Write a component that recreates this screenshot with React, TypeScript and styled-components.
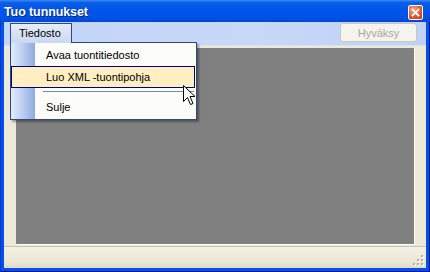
import styled, { createGlobalStyle } from "styled-components";

const GlobalStyle = createGlobalStyle`
  html, body {
    margin: 0;
    padding: 0;
    overflow: hidden;
    background: #ffffff;
  }
`;

const Window = styled.div`
  width: 430px;
  height: 272px;
  display: flex;
  flex-direction: column;
  background: #0053e4;
  box-shadow: inset 1px 0 0 #0831d9, inset -1px 0 0 #00138c, inset 0 -1px 0 #00138c;
  font-family: "Liberation Sans", Arial, sans-serif;
  font-size: 11px;
  color: #000000;
`;

const TitleBar = styled.div`
  height: 22px;
  flex: none;
  display: flex;
  align-items: center;
  justify-content: space-between;
  padding: 0 7px 0 4px;
  background: linear-gradient(
    #3b8cf5 0%,
    #0a5ee8 12%,
    #0055ea 40%,
    #0052e6 80%,
    #0047d6 100%
  );
`;

const Title = styled.span`
  color: #ffffff;
  font-weight: bold;
  font-size: 12.5px;
  letter-spacing: -0.1px;
  text-shadow: 1px 1px 0 #0a1f7a;
  padding-top: 1px;
`;

const CloseButton = styled.div`
  width: 13px;
  height: 13px;
  margin-top: 3px;
  border: 1px solid #ffffff;
  border-radius: 2px;
  background: radial-gradient(circle at 35% 30%, #f6a58b 0%, #e35a2e 55%, #c2330e 100%);
  display: flex;
  align-items: center;
  justify-content: center;
`;

const Client = styled.div`
  flex: 1;
  margin: 0 4px 4px 4px;
  display: flex;
  flex-direction: column;
  background: #ece9d8;
  position: relative;
`;

const Toolbar = styled.div`
  height: 24px;
  flex: none;
  display: flex;
  align-items: flex-start;
  justify-content: space-between;
  padding: 1px 9px 0 6px;
  box-sizing: border-box;
  background: linear-gradient(90deg, #c3d5f8 0%, #c7d8f8 60%, #bfd1f5 100%);
  border-bottom: 1px solid #d8e2f2;
`;

const MenuTab = styled.div`
  height: 20px;
  width: 62px;
  box-sizing: border-box;
  padding: 3px 0 0 8px;
  border: 1px solid #2d4a86;
  border-bottom: none;
  background: linear-gradient(#e6edf9, #c9d7ef);
  position: relative;
  z-index: 2;
`;

const DisabledButton = styled.div`
  width: 77px;
  height: 19px;
  box-sizing: border-box;
  border: 1px solid #cbc8b8;
  border-radius: 3px;
  background: #f4f3ee;
  color: #aca899;
  display: flex;
  align-items: center;
  justify-content: center;
  font-size: 11px;
`;

const Content = styled.div`
  flex: 1;
  padding: 2px 12px 2px 12px;
  display: flex;
`;

const GrayPanel = styled.div`
  flex: 1;
  background: #808080;
  box-shadow: 1px 1px 0 #ffffff;
`;

const StatusBar = styled.div`
  height: 22px;
  flex: none;
  border-top: 1px solid #c8c5b2;
  background: linear-gradient(#f2f0e4, #ebe8d6 70%, #e0dcc8);
  display: flex;
  justify-content: flex-end;
  align-items: flex-end;
  padding: 0 2px 2px 0;
  box-sizing: border-box;
`;

const Menu = styled.div`
  position: absolute;
  left: 6px;
  top: 20px;
  width: 187px;
  box-sizing: border-box;
  border: 1px solid #2d4a86;
  background: #fcfcf9;
  display: flex;
  box-shadow: 2px 2px 2px rgba(0, 0, 0, 0.35);
  z-index: 1;
`;

const MenuStrip = styled.div`
  width: 24px;
  flex: none;
  background: linear-gradient(90deg, #e3ecfb 0%, #bfd1f2 45%, #8eaadf 100%);
`;

const MenuList = styled.div`
  flex: 1;
  padding: 1px 0 1px 0;
  margin-left: -24px;
  display: flex;
  flex-direction: column;
`;

const MenuItem = styled.div<{ $active?: boolean }>`
  height: 22px;
  box-sizing: border-box;
  margin: 0 1px 0 0;
  padding-left: 34px;
  display: flex;
  align-items: center;
  border: 1px solid ${(p) => (p.$active ? "#000080" : "transparent")};
  background: ${(p) => (p.$active ? "#ffeec2" : "transparent")};
`;

const Separator = styled.div`
  height: 1px;
  margin: 3px 2px 4px 32px;
  background: #6a8ccb;
`;

const Cursor = styled.svg`
  position: absolute;
  left: 179px;
  top: 63px;
  z-index: 3;
`;

const Grip = styled.svg`
  display: block;
`;

function CloseIcon() {
  return (
    <svg width="9" height="9" viewBox="0 0 9 9">
      <path d="M1.5 1.5 L7.5 7.5 M7.5 1.5 L1.5 7.5" stroke="#ffffff" strokeWidth="1.8" strokeLinecap="square" />
    </svg>
  );
}

function ResizeGrip() {
  const dots = [
    [9, 1],
    [9, 5],
    [5, 5],
    [9, 9],
    [5, 9],
    [1, 9],
  ];
  return (
    <Grip width="12" height="12" viewBox="0 0 12 12">
      {dots.map(([x, y]) => (
        <g key={`${x}-${y}`}>
          <rect x={x + 1} y={y + 1} width="2" height="2" fill="#ffffff" />
          <rect x={x} y={y} width="2" height="2" fill="#b8b49f" />
        </g>
      ))}
    </Grip>
  );
}

export default function App() {
  return (
    <>
      <GlobalStyle />
      <Window>
        <TitleBar>
          <Title>Tuo tunnukset</Title>
          <CloseButton>
            <CloseIcon />
          </CloseButton>
        </TitleBar>
        <Client>
          <Toolbar>
            <MenuTab>Tiedosto</MenuTab>
            <DisabledButton>Hyväksy</DisabledButton>
          </Toolbar>
          <Content>
            <GrayPanel />
          </Content>
          <StatusBar>
            <ResizeGrip />
          </StatusBar>
          <Menu>
            <MenuStrip />
            <MenuList>
              <MenuItem>Avaa tuontitiedosto</MenuItem>
              <MenuItem $active>Luo XML -tuontipohja</MenuItem>
              <Separator />
              <MenuItem>Sulje</MenuItem>
            </MenuList>
          </Menu>
          <Cursor width="13" height="21" viewBox="0 0 13 21">
            <path
              d="M0.5 0.5 L0.5 16.5 L4.5 12.5 L7.5 19.5 L10 18.5 L7 11.5 L12 11.5 Z"
              fill="#ffffff"
              stroke="#000000"
              strokeWidth="1"
              strokeLinejoin="miter"
            />
          </Cursor>
        </Client>
      </Window>
    </>
  );
}
